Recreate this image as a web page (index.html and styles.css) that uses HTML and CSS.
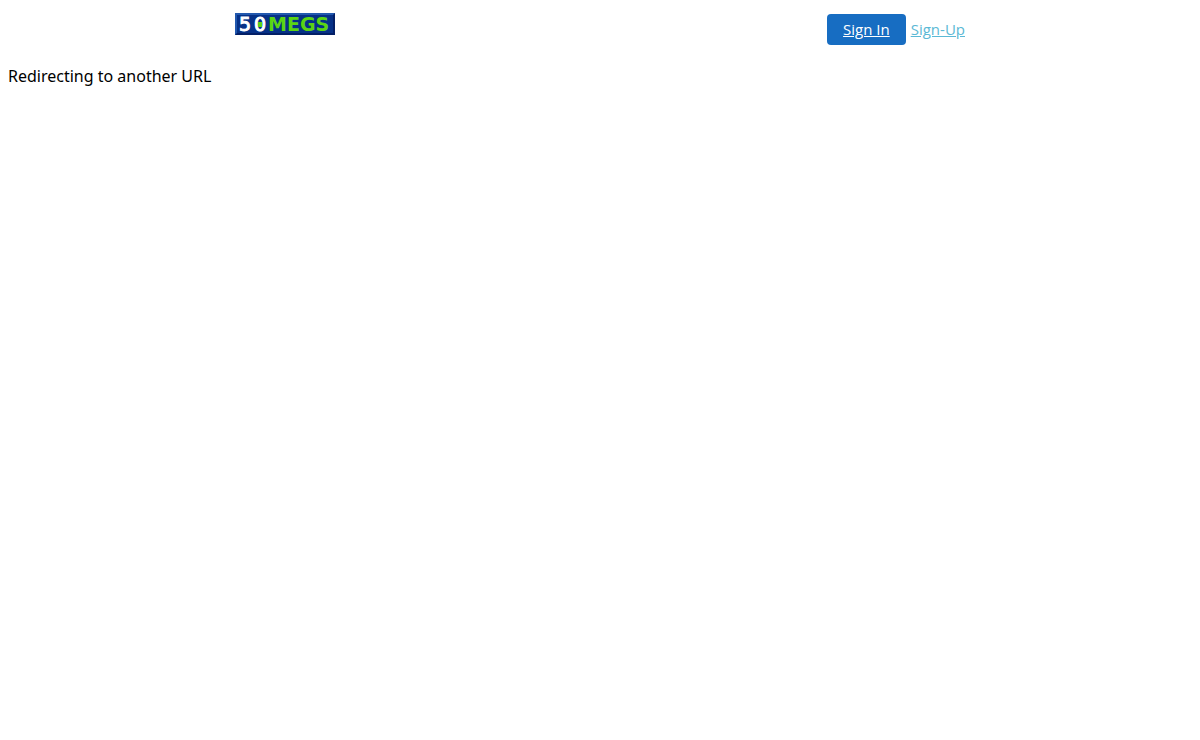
FILE: index.html
```
<!DOCTYPE html>
<html lang="en">
<head>
    <meta charset="UTF-8" />
    <meta name="viewport" content="width=device-width, initial-scale=1.0" />
    <title>50megs</title>
    <link rel="stylesheet" href="styles.css">
</head>
<body>
    <header class="header">
        <a class="logo" href="#" aria-label="50megs home">
            <svg width="100" height="22" viewBox="0 0 100 22">
                <rect width="100" height="22" fill="#031f66" />
                <path d="M0 22V0H100L98 2H2V20Z" fill="#2258ae" />
                <rect x="2" y="2" width="96" height="18" fill="#063187" />
                <text class="logo-number" x="4 19" y="18">50</text>
                <rect x="23" y="9" width="4" height="5" fill="#5bd413" />
                <text class="logo-name" x="33" y="18">MEGS</text>
            </svg>
        </a>
        <nav class="account">
            <a class="sign-in" href="#">Sign In</a>
            <a class="sign-up" href="#">Sign-Up</a>
        </nav>
    </header>

    <main class="message">Redirecting to another URL</main>
</body>
</html>
```
FILE: styles.css
```
body {
    margin: 0;
    background-color: white;
    color: black;
    font-family: "Noto Sans", "Open Sans", sans-serif;
}
.header {
    display: flex;
    justify-content: space-between;
    align-items: flex-start;
    max-width: 730px;
    margin: 0 auto;
    padding: 13px 0 20px;
}
.logo svg {
    display: block;
}
.logo-number, .logo-name {
    font-family: "DejaVu Sans", sans-serif;
    font-size: 19px;
}
.logo-number {
    fill: white;
    stroke: white;
    stroke-width: 1px;
}
.logo-name {
    fill: #5bd413;
    font-weight: bold;
}

.account {
    display: flex;
    align-items: center;
    gap: 5px;
    padding-top: 1px;
    font-family: "Open Sans", sans-serif;
    font-size: 15px;
    line-height: 19px;
}
.sign-in {
    padding: 6px 16px;
    border-radius: 4px;
    background-color: #176dc2;
    color: white;
}
.sign-up {
    color: #5bb9d5;
}
.message {
    padding: 0 8px;
    font-size: 16px;
    line-height: 22px;
}
```
